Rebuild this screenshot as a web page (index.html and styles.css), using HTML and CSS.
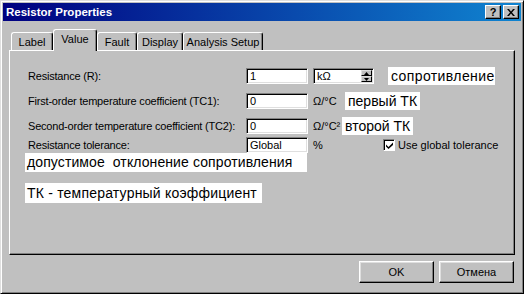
FILE: index.html
```html
<!DOCTYPE html>
<html>
<head>
<meta charset="utf-8">
<link rel="stylesheet" href="styles.css">
</head>
<body>
<div class="window">
  <div class="titlebar">
    <span class="title">Resistor Properties</span>
    <div class="tbtns">
      <span class="tbtn">?</span>
      <span class="tbtn"><svg width="8" height="7" viewBox="0 0 8 7"><path d="M0 0h2l2 2.5L6 0h2L5 3.5 8 7H6L4 4.5 2 7H0l3-3.5z" fill="#000"/></svg></span>
    </div>
  </div>
  <div class="content">
    <div class="tabs">
      <div class="tab w-label">Label</div>
      <div class="tab active w-value">Value</div>
      <div class="tab w-fault">Fault</div>
      <div class="tab w-display">Display</div>
      <div class="tab w-analysis">Analysis Setup</div>
    </div>
    <div class="panel">
      <div class="row">
        <span class="lbl">Resistance (R):</span>
        <span class="field">1</span>
        <span class="spin">kΩ<span class="spinbtns"><span class="sb"><svg width="5" height="3" viewBox="0 0 5 3"><path d="M2.5 0L5 3H0z" fill="#000"/></svg></span><span class="sb"><svg width="5" height="3" viewBox="0 0 5 3"><path d="M0 0h5L2.5 3z" fill="#000"/></svg></span></span></span>
        <span class="note n1">сопротивление</span>
      </div>
      <div class="row">
        <span class="lbl">First-order temperature coefficient (TC1):</span>
        <span class="field">0</span>
        <span class="unit">Ω/°C</span>
        <span class="note">первый ТК</span>
      </div>
      <div class="row">
        <span class="lbl">Second-order temperature coefficient (TC2):</span>
        <span class="field">0</span>
        <span class="unit narrow">Ω/°C²</span>
        <span class="note">второй ТК</span>
      </div>
      <div class="row tight">
        <span class="lbl">Resistance tolerance:</span>
        <span class="field">Global</span>
        <span class="unit wide">%</span>
        <span class="check"><svg width="7" height="7" viewBox="0 0 7 7"><path d="M0 2.5l2.5 2.5L7 0.5V3L2.5 7 0 4.5z" fill="#000"/></svg></span>
        <span class="chklbl">Use global tolerance</span>
      </div>
      <div class="block b1">допустимое&nbsp; отклонение сопротивления</div>
      <div class="block b2">ТК - температурный коэффициент</div>
    </div>
    <div class="actions">
      <span class="btn">OK</span>
      <span class="btn">Отмена</span>
    </div>
  </div>
</div>
</body>
</html>
```
FILE: styles.css
```css
html, body {
  margin: 0;
  padding: 0;
  background: #c0c0c0;
}

.window {
  width: 524px;
  height: 294px;
  box-sizing: border-box;
  border: 1px solid;
  border-color: #dfdfdf #000 #000 #dfdfdf;
  box-shadow: inset 1px 1px #fff, inset -1px -1px #808080;
  padding: 2px;
  background: #c0c0c0;
  display: flex;
  flex-direction: column;
  font-family: "Liberation Sans", Arial, sans-serif;
  font-size: 11px;
  color: #000;
}

.titlebar {
  height: 18px;
  flex: none;
  background: linear-gradient(to right, #000080, #1084d0);
  display: flex;
  align-items: center;
  justify-content: space-between;
  padding: 0 2px 0 3px;
}

.title {
  color: #fff;
  font-weight: bold;
  font-size: 11.5px;
}

.tbtns {
  display: flex;
  gap: 2px;
}

.tbtn {
  width: 16px;
  height: 14px;
  box-sizing: border-box;
  background: #c0c0c0;
  border: 1px solid;
  border-color: #fff #000 #000 #fff;
  box-shadow: inset -1px -1px #808080;
  display: flex;
  align-items: center;
  justify-content: center;
  font-weight: bold;
  font-size: 11px;
  line-height: 1;
}

.content {
  flex: 1;
  display: flex;
  flex-direction: column;
  padding: 8px 6px 0 6px;
}

.tabs {
  display: flex;
  align-items: flex-end;
  height: 21px;
  padding-left: 2px;
}

.tab {
  height: 18px;
  box-sizing: border-box;
  border-top: 1px solid #fff;
  border-left: 1px solid #fff;
  border-right: 1px solid #000;
  border-radius: 3px 3px 0 0;
  box-shadow: inset -1px 0 #808080;
  display: flex;
  align-items: center;
  justify-content: center;
  background: #c0c0c0;
}

.tab.active {
  height: 22px;
  margin-bottom: -1px;
  padding-bottom: 3px;
  position: relative;
  z-index: 1;
}

.w-label { width: 42px; }
.w-value { width: 44px; }
.w-fault { width: 40px; }
.w-display { width: 46px; }
.w-analysis { width: 80px; }

.panel {
  height: 205px;
  box-sizing: border-box;
  border: 1px solid;
  border-color: #fff #000 #000 #fff;
  box-shadow: inset -1px -1px #808080;
  padding: 17px 0 0 18px;
  display: flex;
  flex-direction: column;
}

.row {
  display: flex;
  align-items: center;
  height: 16px;
}

.row + .row {
  margin-top: 9px;
}

.row.tight {
  margin-top: 3px;
}

.lbl {
  width: 218px;
  flex: none;
  letter-spacing: -0.2px;
  white-space: nowrap;
}

.field {
  width: 62px;
  height: 16px;
  flex: none;
  box-sizing: border-box;
  background: #fff;
  border: 1px solid;
  border-color: #808080 #fff #fff #808080;
  box-shadow: inset 1px 1px #000, inset -1px -1px #dfdfdf;
  padding-left: 3px;
  line-height: 14px;
}

.spin {
  width: 61px;
  height: 16px;
  margin-left: 5px;
  flex: none;
  box-sizing: border-box;
  background: #fff;
  border: 1px solid;
  border-color: #808080 #fff #fff #808080;
  box-shadow: inset 1px 1px #000, inset -1px -1px #dfdfdf;
  padding: 1px 1px 1px 3px;
  line-height: 12px;
  display: flex;
  justify-content: space-between;
}

.spinbtns {
  display: flex;
  flex-direction: column;
  width: 11px;
}

.sb {
  flex: 1;
  box-sizing: border-box;
  background: #c0c0c0;
  border: 1px solid;
  border-color: #dfdfdf #000 #000 #dfdfdf;
  display: flex;
  align-items: center;
  justify-content: center;
}

.unit {
  margin-left: 5px;
  width: 32px;
  flex: none;
  white-space: nowrap;
}

.unit.narrow { width: 29px; }
.unit.wide { width: 70px; }

.note {
  background: #fff;
  font-size: 14px;
  height: 18px;
  line-height: 18px;
  padding: 0 3px 0 3px;
  flex: none;
  white-space: nowrap;
}

.n1 {
  margin-left: 14px;
  width: 101px;
  letter-spacing: 0.4px;
}

.check {
  width: 12px;
  height: 12px;
  box-sizing: border-box;
  background: #fff;
  border: 1px solid;
  border-color: #808080 #fff #fff #808080;
  box-shadow: inset 1px 1px #000;
  display: flex;
  align-items: center;
  justify-content: center;
  flex: none;
}

.chklbl {
  margin-left: 3px;
}

.block {
  background: #fff;
  font-size: 14px;
  margin-left: -3px;
  padding-left: 2px;
  box-sizing: border-box;
  white-space: nowrap;
}

.b1 {
  width: 282px;
  height: 19px;
  line-height: 19px;
  letter-spacing: 0.1px;
}

.b2 {
  width: 237px;
  height: 20px;
  line-height: 20px;
  margin-top: 11px;
  letter-spacing: 0.2px;
}

.actions {
  display: flex;
  justify-content: flex-end;
  gap: 5px;
  margin-top: 6px;
  padding-right: 1px;
}

.btn {
  width: 75px;
  height: 22px;
  box-sizing: border-box;
  border: 1px solid;
  border-color: #fff #000 #000 #fff;
  box-shadow: inset -1px -1px #808080, inset 1px 1px #dfdfdf;
  display: flex;
  align-items: center;
  justify-content: center;
}
```
